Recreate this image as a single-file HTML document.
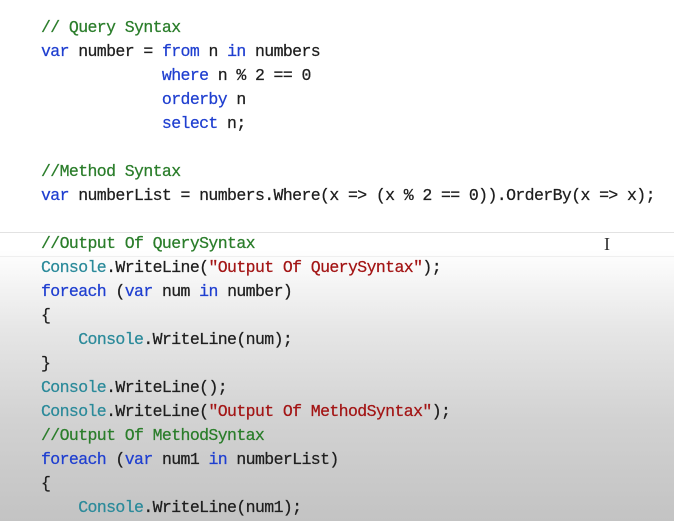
<!DOCTYPE html>
<html><head><style>
html,body{margin:0;padding:0}
body{width:674px;height:521px;overflow:hidden;position:relative;
background:linear-gradient(to bottom,#fff 0px,#fff 250px,#e6e6e6 330px,#d2d2d2 420px,#c3c3c3 521px);}
.sep{position:absolute;left:0;right:0;top:232px;height:1px;background:#e2e2e2}
.sep2{position:absolute;left:0;right:0;top:256px;height:1px;background:#efefef}
pre{position:absolute;left:41px;top:16px;margin:0;font-family:"Liberation Mono",monospace;font-size:16.5px;letter-spacing:-0.6px;line-height:24px;color:#1e1e1e;-webkit-text-stroke:0.25px currentColor}
.c{color:#2a7d2a}.k{color:#1f3fd0}.t{color:#2b8a9a}.s{color:#a31515}
.cur{position:absolute;left:604px;top:234px;font-family:"Liberation Serif",serif;font-size:18px;color:#333}
</style></head><body>
<div class="sep"></div><div class="sep2"></div>
<pre><span class="c">// Query Syntax</span>
<span class="k">var</span> number = <span class="k">from</span> n <span class="k">in</span> numbers
             <span class="k">where</span> n % 2 == 0
             <span class="k">orderby</span> n
             <span class="k">select</span> n;

<span class="c">//Method Syntax</span>
<span class="k">var</span> numberList = numbers.Where(x =&gt; (x % 2 == 0)).OrderBy(x =&gt; x);

<span class="c">//Output Of QuerySyntax</span>
<span class="t">Console</span>.WriteLine(<span class="s">"Output Of QuerySyntax"</span>);
<span class="k">foreach</span> (<span class="k">var</span> num <span class="k">in</span> number)
{
    <span class="t">Console</span>.WriteLine(num);
}
<span class="t">Console</span>.WriteLine();
<span class="t">Console</span>.WriteLine(<span class="s">"Output Of MethodSyntax"</span>);
<span class="c">//Output Of MethodSyntax</span>
<span class="k">foreach</span> (<span class="k">var</span> num1 <span class="k">in</span> numberList)
{
    <span class="t">Console</span>.WriteLine(num1);</pre>
<div class="cur">I</div>
</body></html>
